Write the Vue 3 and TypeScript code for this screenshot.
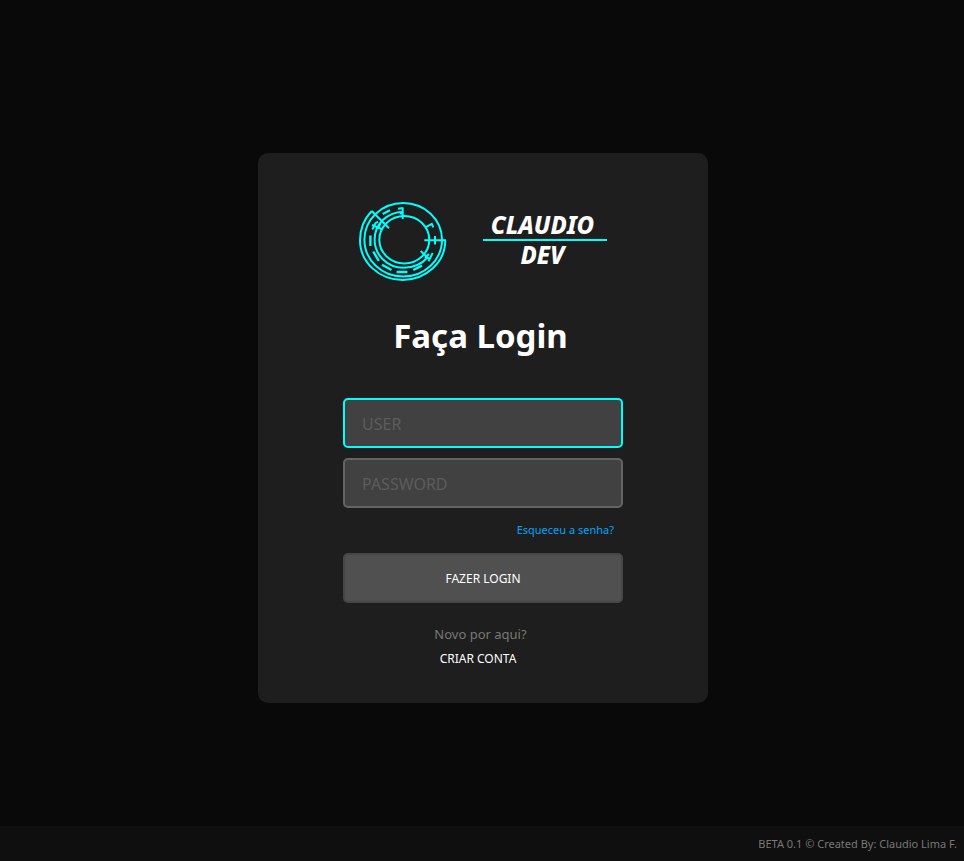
<script setup lang="ts">
import { ref } from 'vue'

const user = ref('')
const password = ref('')
</script>

<template>
  <div class="page">
    <main class="stage">
      <form class="card" @submit.prevent>
        <header class="brand">
          <svg class="emblem" viewBox="0 0 90 82" aria-hidden="true">
            <g fill="none" stroke="#00ffff" stroke-width="2">
              <path d="M13.7 10A42.7 42.6 0 0 0 2 39.3A42.7 39.7 0 0 0 44.7 79A42.7 39.7 0 0 0 87.3 39.3" />
              <ellipse cx="45.2" cy="38.7" rx="38.8" ry="36.8" />
              <path d="M44.7 10.9A28.2 27.8 0 0 0 16.6 38.7A28.7 28 0 0 0 45.3 66.7A31 28 0 0 0 70 56" />
              <ellipse cx="46.3" cy="38.7" rx="25" ry="23.7" />
              <path d="M13.7 10L31 27.3" />
              <path d="M40 7.7L44.7 7M44.7 6.5V18M42 12.5H45" />
              <path d="M66.3 39.3H88M77 35V43.5" />
              <path d="M67 26.6L73.8 22.8L75.3 26.3" />
              <path d="M62.7 50L72 58.7M74.7 52L70.5 60.3M67 57L71 53" />
              <path d="M14.3 28.5L17.6 22M14 24L24.8 28.5M17 22.5L20 20.7M20 28L22.5 22" />
              <path d="M24.7 13L32 9.3M12.4 34.5V45M15.3 50.5L20.8 60M24 63.7L33.5 69M38.6 71H49.4M55.3 69L64 64.6" stroke-width="2.4" />
            </g>
          </svg>
          <div class="wordmark">
            <span>CLAUDIO</span>
            <span class="second">DEV</span>
          </div>
        </header>

        <h1>Faça Login</h1>

        <div class="fields">
          <input v-model="user" class="active" type="text" placeholder="USER" aria-label="USER" autocomplete="username" />
          <input v-model="password" type="password" placeholder="PASSWORD" aria-label="PASSWORD" autocomplete="current-password" />
        </div>

        <a class="forgot" href="#">Esqueceu a senha?</a>
        <button type="submit">FAZER LOGIN</button>

        <div class="signup">
          <p>Novo por aqui?</p>
          <a href="#">CRIAR CONTA</a>
        </div>
      </form>
    </main>
    <footer>BETA 0.1 © Created By: Claudio Lima F.</footer>
  </div>
</template>

<style>
body {
  margin: 0;
  background: #090909;
}
</style>

<style scoped>
* {
  box-sizing: border-box;
}

.page {
  display: flex;
  flex-direction: column;
  min-height: 100vh;
  background: #090909;
  color: #fff;
  font-family: "Segoe UI", "Noto Sans", "Open Sans", sans-serif;
}

.stage {
  flex: 1;
  display: flex;
  align-items: center;
  justify-content: center;
  padding: 30px 0 0 2px;
}

.card {
  display: flex;
  flex-direction: column;
  align-items: center;
  width: 450px;
  max-width: 100%;
  min-height: 550px;
  padding: 48px 85px 32px;
  border-radius: 10px;
  background: #1e1e1e;
}

.brand {
  display: flex;
  align-items: flex-start;
  gap: 35px;
  margin-right: 2px;
}

.emblem {
  width: 90px;
  height: 82px;
}

.wordmark {
  display: flex;
  flex-direction: column;
  width: 124px;
  margin-top: 10px;
  font-family: "Noto Sans", "Open Sans", sans-serif;
  font-size: 24px;
  font-weight: 800;
  font-style: italic;
  line-height: 28px;
  text-align: center;
}

.wordmark span {
  padding-right: 4px;
}

.wordmark .second {
  border-top: 2px solid #00ffff;
}

h1 {
  margin: 29px 5px 0 0;
  font-size: 33px;
  font-weight: 700;
  line-height: 48px;
}

.fields {
  display: flex;
  flex-direction: column;
  gap: 10px;
  width: 100%;
  margin-top: 38px;
}

input {
  width: 100%;
  height: 50px;
  padding: 2px 17px 0;
  border: 2px solid #646464;
  border-radius: 5px;
  outline: none;
  background: #414141;
  color: #fff;
  font: 400 16px "Segoe UI", "Noto Sans", "Open Sans", sans-serif;
}

input.active {
  border-color: #00ffff;
}

input::placeholder {
  color: #5c5c5c;
  opacity: 1;
}

a {
  text-decoration: none;
}

.forgot {
  align-self: flex-end;
  margin: 14px 9px 0 0;
  color: #00a5fa;
  font-size: 11px;
  line-height: 16px;
}

button {
  width: 100%;
  height: 50px;
  margin-top: 15px;
  padding: 0;
  border: 2px solid #464646;
  border-radius: 5px;
  background: #505050;
  color: #fff;
  font: 400 12px "Segoe UI", "Noto Sans", "Open Sans", sans-serif;
}

.signup {
  display: flex;
  flex-direction: column;
  align-items: center;
  gap: 5px;
  margin: 21px 5px 0 0;
}

.signup p {
  margin: 0;
  color: #787878;
  font-size: 13px;
  line-height: 20px;
}

.signup a {
  margin-right: 5px;
  color: #fff;
  font-size: 12px;
  line-height: 20px;
}

footer {
  padding: 9px 7px 8px;
  background: #0f0f0f;
  color: #787878;
  font-size: 11px;
  line-height: 18px;
  text-align: right;
}
</style>
